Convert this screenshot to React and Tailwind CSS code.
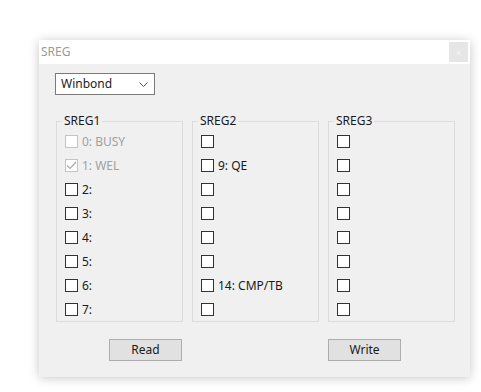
import React from 'react';

const font = { fontFamily: '"Noto Sans", "Open Sans", sans-serif' };

// one checkbox row, windows classic style
const Bit = ({ label, checked, disabled }) => (
  <div className="flex items-center h-[13px] gap-[4px]">
    <div
      className={
        'w-[13px] h-[13px] shrink-0 border bg-white flex items-center justify-center ' +
        (disabled ? 'border-[#c4c4c4]' : 'border-[#333333]')
      }
    >
      {checked && (
        <svg width="11" height="9" viewBox="0 0 11 9">
          <polyline points="1,4.5 4,7.5 10,1" fill="none" stroke="#a8a8a8" strokeWidth="1.2" />
        </svg>
      )}
    </div>
    {label && (
      <span className={'text-[12px] leading-none ' + (disabled ? 'text-[#a0a0a0]' : 'text-[#1a1a1a]')}>
        {label}
      </span>
    )}
  </div>
);

const Group = ({ title, bits }) => (
  <fieldset className="w-[127px] border border-[#dcdcdc] p-0">
    <legend className="ml-[5px] px-[2px] text-[12px] leading-[16px] text-[#1a1a1a]">{title}</legend>
    <div className="flex flex-col gap-[11px] px-[8px] pt-[6px] pb-[5px]">
      {bits.map((b, i) => (
        <Bit key={i} {...b} />
      ))}
    </div>
  </fieldset>
);

const sreg1 = [
  { label: '0: BUSY', disabled: true },
  { label: '1: WEL', disabled: true, checked: true },
  { label: '2:' },
  { label: '3:' },
  { label: '4:' },
  { label: '5:' },
  { label: '6:' },
  { label: '7:' },
];

const sreg2 = [
  {},
  { label: '9: QE' },
  {},
  {},
  {},
  {},
  { label: '14: CMP/TB' },
  {},
];

const sreg3 = [{}, {}, {}, {}, {}, {}, {}, {}];

export default function App() {
  return (
    <div className="w-[481px] h-[392px] bg-white overflow-hidden" style={font}>
      <div className="ml-[39px] mt-[40px] w-[431px] h-[337px] bg-[#f0f0f0] shadow-[0_1px_10px_rgba(0,0,0,0.22)] flex flex-col">
        {/* title bar */}
        <div className="h-[24px] bg-white flex items-center justify-between pl-[2px] pr-[2px]">
          <span className="text-[12px] text-[#9a9a9a]">SREG</span>
          <div className="w-[19px] h-[20px] bg-[#e6e6e6] flex items-center justify-center">
            <span className="text-[9px] text-[#f4f4f4] leading-none">×</span>
          </div>
        </div>

        <div className="px-[16px] pt-[9px]">
          <div className="w-[100px] h-[22px] bg-white border border-[#7a7a7a] flex items-center justify-between pl-[5px] pr-[6px]">
            <span className="text-[12px] text-[#1a1a1a]">Winbond</span>
            <svg width="9" height="5" viewBox="0 0 9 5">
              <polyline points="0.5,0.5 4.5,4.5 8.5,0.5" fill="none" stroke="#555" strokeWidth="1" />
            </svg>
          </div>
        </div>

        <div className="flex gap-[9px] pl-[17px] mt-[18px]">
          <Group title="SREG1" bits={sreg1} />
          <Group title="SREG2" bits={sreg2} />
          <Group title="SREG3" bits={sreg3} />
        </div>

        <div className="flex pl-[70px] mt-[17px] gap-[146px]">
          <button className="w-[73px] h-[22px] bg-[#e1e1e1] border border-[#adadad] text-[12px] text-[#1a1a1a]">
            Read
          </button>
          <button className="w-[73px] h-[22px] bg-[#e1e1e1] border border-[#adadad] text-[12px] text-[#1a1a1a]">
            Write
          </button>
        </div>
      </div>
    </div>
  );
}
